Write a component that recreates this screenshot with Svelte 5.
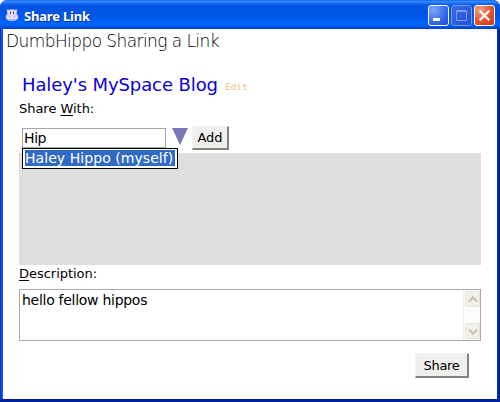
<script>
  let recipient = $state('Hip');
  let description = $state('hello fellow hippos');
</script>

<div class="window">
  <header>
    <svg class="hippo" width="14" height="14" viewBox="0 0 14 14">
      <path d="M2 1.5Q1 3 2.3 4L2 6Q0 8 .8 10Q2 13 7 13Q12 13 13.2 10Q14 8 12 6L11.7 4Q13 3 12 1.5L10 1.8Q7 .5 4 1.8Z" fill="#c9c5ee" />
      <path d="M3 3Q7 1 11 3L11 6Q7 7.5 3 6Z" fill="#e5e1f8" />
      <path d="M5.5 3.5v2.5M8.5 3.5v2.5" stroke="#45417c" stroke-width="1.1" />
      <ellipse cx="7" cy="9.5" rx="5.2" ry="2.8" fill="#e3dbf7" />
      <path d="M4 8.5h1M9 8.5h1M4 11.5q3 1 6 0" stroke="#a79bd6" fill="none" />
    </svg>
    <span class="title">Share Link</span>
    <div class="controls">
      <button class="ctl" aria-label="Minimize">
        <svg width="19" height="19"><rect x="4" y="12" width="7" height="3" fill="#fff" /></svg>
      </button>
      <button class="ctl off" aria-label="Maximize" disabled>
        <svg width="19" height="19"><path d="M4.5 4.5h10v10h-10zM4 5.5h11" fill="none" stroke="#7f9df0" /></svg>
      </button>
      <button class="ctl close" aria-label="Close">
        <svg width="19" height="19"><path d="M4.7 4.7l9.6 9.6M14.3 4.7l-9.6 9.6" stroke="#fff" stroke-width="2.2" /></svg>
      </button>
    </div>
  </header>

  <main>
    <h1>DumbHippo Sharing a Link</h1>
    <div class="link"><span class="name">Haley's MySpace Blog</span><span class="edit">Edit</span></div>
    <div class="label with">Share <u>W</u>ith:</div>
    <div class="picker">
      <input aria-label="Share With" bind:value={recipient} />
      <svg class="arrow" width="16" height="17"><path d="M0 0h16L8 17z" fill="#7b78b8" /></svg>
      <button class="btn add">Add</button>
      <div class="suggest"><span>Haley Hippo (myself)</span></div>
    </div>
    <div class="recipients"></div>
    <div class="label desc"><u>D</u>escription:</div>
    <div class="area">
      <textarea aria-label="Description" bind:value={description}></textarea>
      <div class="scroll">
        <div class="sb"><svg width="14" height="15"><path d="M3 9.5l4-4 4 4" fill="none" stroke="#c7c5bb" stroke-width="2.4" /></svg></div>
        <div class="sb"><svg width="14" height="15"><path d="M3 5.5l4 4 4-4" fill="none" stroke="#c7c5bb" stroke-width="2.4" /></svg></div>
      </div>
    </div>
    <div class="actions"><button class="btn share">Share</button></div>
  </main>
</div>

<style>
  :global(body) { margin: 0; background: #fff; overflow: hidden; }
  * { box-sizing: border-box; }
  .window {
    width: 500px; height: 402px; display: flex; flex-direction: column;
    background: linear-gradient(90deg, #0831d9, #1660ec 3px, #0440d0 496px, #001ea0 499px);
    border-bottom: 3px solid #001d9e; border-radius: 7px 7px 0 0; overflow: hidden;
    font-family: "DejaVu Sans", sans-serif; color: #000;
  }
  header {
    height: 29px; flex: none; display: flex; align-items: center; padding: 0 5px 0 5px;
    background: linear-gradient(#0a50d8 0, #3b91ff 1px, #1f75f5 3px, #0759e4 5px, #0053e0 10px, #0057ea 17px, #0064fb 22px, #0062f8 25px, #0048cf 28px, #003fba 29px);
  }
  .hippo { flex: none; }
  .title {
    margin: 3px 0 0 5px; font: bold 13px/18px "Noto Sans", sans-serif; color: #fff;
    letter-spacing: -0.2px; text-shadow: 1px 1px 0 #0a2f91; white-space: nowrap;
  }
  .controls { margin: 2px 0 0 auto; display: flex; gap: 2px; }
  .ctl {
    width: 21px; height: 21px; padding: 0; border: 1px solid #fff; border-radius: 3px;
    background: radial-gradient(circle at 25% 20%, #7fa6f6, #3b6eea 55%, #1648d1);
  }
  .ctl svg { display: block; }
  .off { border-color: #7796ed; background: linear-gradient(135deg, #3a6be8, #1f50d8); }
  .close { background: radial-gradient(circle at 25% 20%, #f0a184, #e0542f 55%, #c9370f); }
  main { flex: 1; margin: 0 3px; background: #fff; display: flex; flex-direction: column; }
  h1 { margin: 2px 0 0 3px; font-weight: 200; font-size: 17px; line-height: 20px; height: 20px; letter-spacing: -0.58px; white-space: nowrap; }
  .link { height: 24px; margin: 22px 0 0 19px; line-height: 24px; white-space: nowrap; }
  .name { font-size: 18px; letter-spacing: -0.1px; color: #0b00d8; }
  .edit { margin-left: 7px; position: relative; top: -1px; font: 9.5px "DejaVu Sans Mono", monospace; color: #f3bf80; }
  .label { margin-left: 16px; font-size: 13px; line-height: 18px; height: 18px; letter-spacing: -0.03px; white-space: nowrap; }
  .with { margin-top: 3px; }
  u { text-underline-offset: 2px; text-decoration-thickness: 1px; }
  .picker { position: relative; display: flex; height: 35px; padding: 8px 0 0 19px; }
  input {
    width: 144px; height: 20px; margin-top: 2px; padding: 0 1px; border: 1px solid #a6a6a6; border-radius: 0;
    font: 14px "DejaVu Sans", sans-serif; letter-spacing: -0.4px; outline: none;
  }
  .arrow { margin: 2px 4px 0 6px; }
  .btn {
    padding: 0; color: #000; background: #efefee; border: 1px solid #f4f4f3;
    border-right: 2px solid #86837e; border-bottom: 2px solid #86837e;
    font: 13px "DejaVu Sans", sans-serif;
  }
  .add { width: 37px; height: 24px; }
  .suggest {
    position: absolute; left: 19px; top: 30px; width: 156px; height: 21px; padding: 1px;
    border: 1px solid #000; background: #fff; font-size: 14px; line-height: 16px; letter-spacing: 0.06px; color: #fff; white-space: nowrap;
  }
  .suggest span { display: block; height: 16px; margin: 0 1px; background: #316ac5; }
  .recipients { height: 112px; margin: 0 16px; background: #dedede; }
  .area { display: flex; height: 52px; margin: 6px 16px 0; border: 1px solid #aaa; }
  textarea {
    flex: 1; padding: 2px; border: 0; resize: none; outline: none; overflow: hidden;
    font: 14px/16px "DejaVu Sans", sans-serif; letter-spacing: -0.28px;
  }
  .scroll { width: 17px; display: flex; flex-direction: column; justify-content: space-between; padding: 1px; background: #fcfcfa; border-left: 1px solid #eeeeea; }
  .sb { width: 15px; height: 16px; background: #f3f2ea; border: 1px solid #e5e3d9; border-radius: 2px; }
  .sb svg { display: block; }
  .actions { display: flex; justify-content: flex-end; margin: 12px 28px 0 0; }
  .share { width: 54px; height: 25px; letter-spacing: -0.3px; }
</style>
